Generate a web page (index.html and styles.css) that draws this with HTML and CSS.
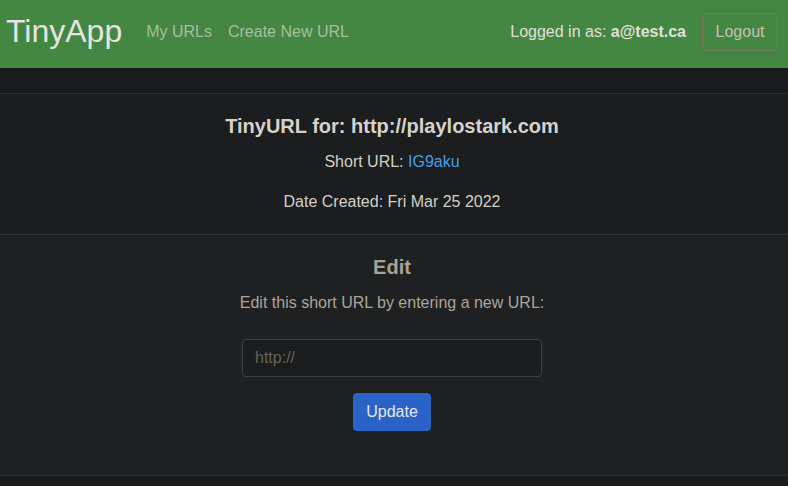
FILE: index.html
```html
<!DOCTYPE html>
<html lang="en">
<head>
<meta charset="utf-8">
<title>TinyApp</title>
<link rel="stylesheet" href="styles.css">
</head>
<body>
<nav class="navbar">
  <a class="brand" href="#">TinyApp</a>
  <div class="nav-links">
    <a class="nav-link" href="#">My URLs</a>
    <a class="nav-link" href="#">Create New URL</a>
  </div>
  <div class="nav-right">
    <span class="user">Logged in as: <b>a@test.ca</b></span>
    <button class="btn-logout" type="button">Logout</button>
  </div>
</nav>
<main class="card">
  <section class="card-header">
    <h5 class="title">TinyURL for: http://playlostark.com</h5>
    <p>Short URL: <a class="short" href="#">IG9aku</a></p>
    <p class="last">Date Created: Fri Mar 25 2022</p>
  </section>
  <section class="card-body">
    <h5 class="edit-title">Edit</h5>
    <p class="edit-text">Edit this short URL by entering a new URL:</p>
    <form class="edit-form">
      <input class="url-input" type="text" placeholder="http://">
      <button class="btn-update" type="button">Update</button>
    </form>
  </section>
  <div class="card-footer"></div>
</main>
</body>
</html>
```
FILE: styles.css
```css
html, body {
  margin: 0;
  padding: 0;
}
body {
  background: #181a1b;
  font-family: "Liberation Sans", Arial, sans-serif;
  font-size: 16px;
  line-height: 1.5;
  color: #d4d0ca;
}
.navbar {
  height: 68px;
  background: #438743;
  display: flex;
  align-items: center;
  padding: 0 10px 0 6px;
  box-sizing: border-box;
}
.brand {
  font-size: 32px;
  color: #e6e4e0;
  text-decoration: none;
  line-height: 1;
  margin-right: 24px;
  margin-top: -6px;
}
.nav-links {
  display: flex;
  gap: 16px;
  flex: 1;
  margin-top: -4px;
}
.nav-link {
  color: #a4c09f;
  text-decoration: none;
}
.nav-right {
  display: flex;
  align-items: center;
  margin-top: -5px;
}
.user {
  color: #e2dfda;
  margin-right: 16px;
  margin-top: 1px;
}
.user b {
  font-weight: bold;
}
.btn-logout {
  font-family: inherit;
  font-size: 16px;
  color: #c6c2b9;
  background: transparent;
  border: 1px solid #7a7565;
  border-radius: 4px;
  width: 76px;
  height: 38px;
  padding: 0;
}
.card {
  display: block;
  margin-top: 25px;
  text-align: center;
  border-top: 1px solid #2d3032;
}
.card-header {
  background: #1b1d1e;
  padding: 20px 4px 20px 0;
  border-bottom: 1px solid #2f3234;
}
.card-header p {
  margin: 0 0 16px;
}
.card-header p.last {
  margin-bottom: 0;
}
.title {
  font-size: 20px;
  font-weight: bold;
  line-height: 24px;
  margin: 0 0 12px;
  color: #d6d2cc;
}
.short {
  color: #4a9ded;
  text-decoration: none;
}
.card-body {
  background: #1e2021;
  padding: 20px 4px 44px 0;
  border-bottom: 1px solid #2f3234;
}
.edit-title {
  font-size: 20px;
  font-weight: bold;
  line-height: 24px;
  margin: 0 0 12px;
  color: #a9a296;
}
.edit-text {
  margin: 0 0 24px;
  color: #aba59b;
}
.edit-form {
  display: flex;
  flex-direction: column;
  align-items: center;
  gap: 16px;
}
.url-input {
  width: 300px;
  height: 38px;
  box-sizing: border-box;
  background: #1a1c1d;
  border: 1px solid #3c4042;
  border-radius: 4px;
  padding: 0 12px;
  font-family: inherit;
  font-size: 16px;
  color: #d4d0ca;
}
.url-input::placeholder {
  color: #68635c;
}
.btn-update {
  width: 78px;
  height: 38px;
  padding: 0;
  background: #2a63c8;
  color: #e8e6e3;
  border: none;
  border-radius: 4px;
  font-family: inherit;
  font-size: 16px;
}
.card-footer {
  height: 10px;
  background: #181a1b;
}
```
